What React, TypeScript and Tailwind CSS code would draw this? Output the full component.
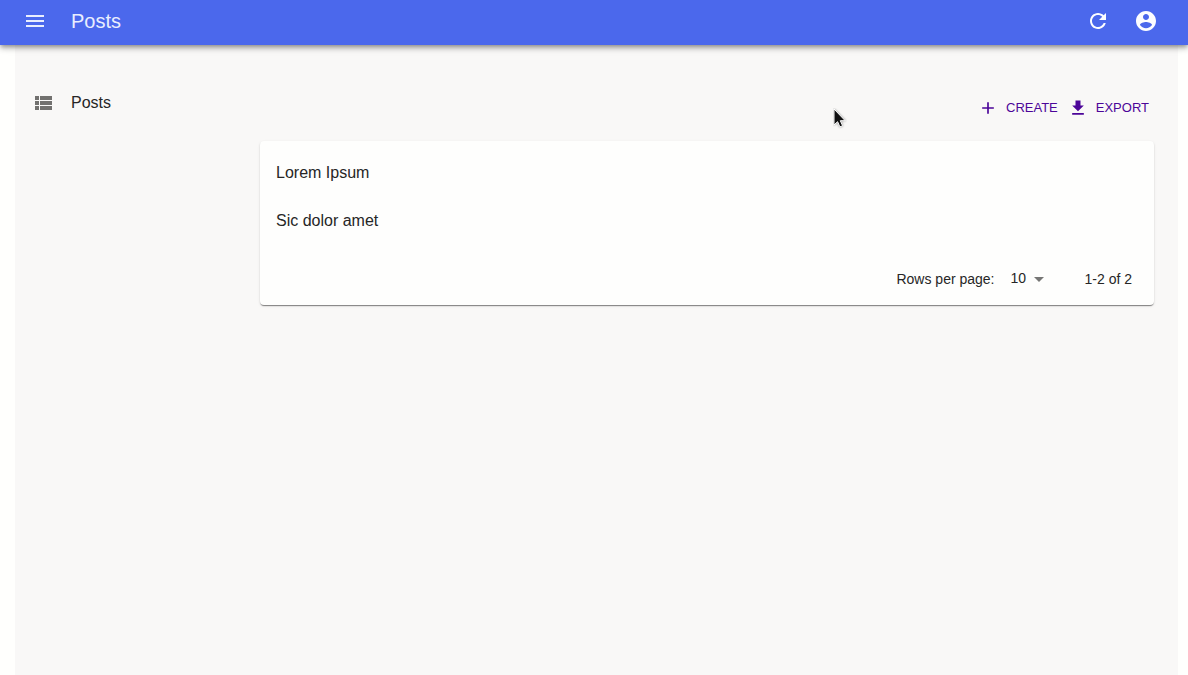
import React from "react";

const icons = {
  menu: "M3 18h18v-2H3v2zm0-5h18v-2H3v2zm0-7v2h18V6H3z",
  refresh:
    "M17.65 6.35C16.2 4.9 14.21 4 12 4c-4.42 0-7.99 3.58-7.99 8s3.57 8 7.99 8c3.73 0 6.84-2.55 7.73-6h-2.08c-.82 2.33-3.04 4-5.65 4-3.31 0-6-2.69-6-6s2.69-6 6-6c1.66 0 3.14.69 4.22 1.78L13 11h7V4l-2.35 2.35z",
  account:
    "M12 2C6.48 2 2 6.48 2 12s4.48 10 10 10 10-4.48 10-10S17.52 2 12 2zm0 3c1.66 0 3 1.34 3 3s-1.34 3-3 3-3-1.34-3-3 1.34-3 3-3zm0 14.2c-2.5 0-4.71-1.28-6-3.22.03-1.99 4-3.08 6-3.08 1.99 0 5.97 1.09 6 3.08-1.29 1.94-3.5 3.22-6 3.22z",
  list: "M4 14h4v-4H4v4zm0 5h4v-4H4v4zM4 9h4V5H4v4zm5 5h12v-4H9v4zm0 5h12v-4H9v4zM9 5v4h12V5H9z",
  add: "M19 13h-6v6h-2v-6H5v-2h6V5h2v6h6v2z",
  download: "M19 9h-4V3H9v6H5l7 7 7-7zM5 18v2h14v-2H5z",
  dropDown: "M7 10l5 5 5-5z",
};

function Icon({ name, className }: { name: keyof typeof icons; className: string }) {
  return (
    <svg viewBox="0 0 24 24" fill="currentColor" aria-hidden="true" className={className}>
      <path d={icons[name]} />
    </svg>
  );
}

function ActionButton({ icon, label }: { icon: keyof typeof icons; label: string }) {
  return (
    <button type="button" className="flex h-8 items-center gap-2 px-[5px] text-[13px] uppercase text-[#4c0599]">
      <Icon name={icon} className="size-5" />
      {label}
    </button>
  );
}

const posts = ["Lorem Ipsum", "Sic dolor amet"];

export default function App() {
  return (
    <div
      className="relative flex min-h-screen flex-col bg-[#fffffd] text-[#262626]"
      style={{ fontFamily: '"Liberation Sans", Arial, sans-serif' }}
    >
      <header className="z-10 flex items-center bg-[#4b68ec] pt-[9px] pr-[30px] pb-3 pl-[23px] text-[#e9eefe] shadow-[0_2px_4px_-1px_rgba(0,0,0,0.3),0_4px_5px_0_rgba(0,0,0,0.16),0_1px_10px_0_rgba(0,0,0,0.12)]">
        <button type="button" aria-label="Open menu">
          <Icon name="menu" className="size-6" />
        </button>
        <h1 className="ml-6 flex-1 text-xl leading-6">Posts</h1>
        <div className="flex gap-6 text-[#fcfdff]">
          <button type="button" aria-label="Refresh">
            <Icon name="refresh" className="size-6" />
          </button>
          <button type="button" aria-label="Profile">
            <Icon name="account" className="size-6" />
          </button>
        </div>
      </header>

      <div className="mr-[10px] ml-[15px] flex flex-1 bg-[#f9f8f7]">
        <nav className="w-[245px] shrink-0 pt-[46px] pl-4">
          <a href="#posts" className="flex items-center gap-4 text-base leading-6">
            <Icon name="list" className="size-6 text-[#72716f]" />
            Posts
          </a>
        </nav>
        <main className="min-w-0 flex-1 pt-[47px] pr-6">
          <div className="flex justify-end">
            <ActionButton icon="add" label="Create" />
            <ActionButton icon="download" label="Export" />
          </div>
          <section className="mt-[17px] rounded bg-[#fefefd] shadow-[0_2px_1px_-1px_rgba(0,0,0,0.3),0_1px_1px_0_rgba(0,0,0,0.2),0_1px_3px_0_rgba(0,0,0,0.1)]">
            <ul className="py-2">
              {posts.map((post) => (
                <li key={post}>
                  <a href="#post" className="flex h-12 items-center px-4 text-base">
                    {post}
                  </a>
                </li>
              ))}
            </ul>
            <div className="flex h-[52px] items-center justify-end pr-[22px] text-sm">
              <label htmlFor="rows">Rows per page:</label>
              <div className="ml-4 grid items-center">
                <select
                  id="rows"
                  defaultValue="10"
                  className="col-start-1 row-start-1 h-6 w-10 appearance-none bg-transparent pb-0.5 text-sm"
                >
                  <option>5</option>
                  <option>10</option>
                  <option>25</option>
                </select>
                <Icon
                  name="dropDown"
                  className="pointer-events-none col-start-1 row-start-1 size-6 justify-self-end text-[#767675]"
                />
              </div>
              <span className="ml-[34px]">1-2 of 2</span>
            </div>
          </section>
        </main>
      </div>

      <svg
        viewBox="0 0 14 22"
        aria-hidden="true"
        className="pointer-events-none absolute top-[108px] left-[833px] z-20 h-[22px] w-[14px]"
      >
        <path
          d="M1 1v16l3.6-3.3 2.3 5.2 2.7-1.2-2.3-5h4.9z"
          fill="#111111"
          stroke="#ffffff"
          strokeWidth="1"
          className="drop-shadow-[0_0_1px_rgba(0,0,0,0.4)]"
        />
      </svg>
    </div>
  );
}
